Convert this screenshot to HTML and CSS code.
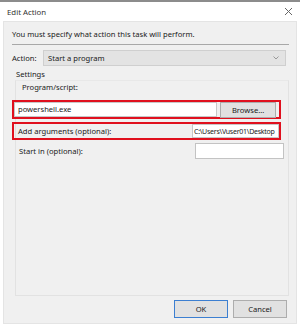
FILE: index.html
```html
<!DOCTYPE html>
<html>
<head>
<meta charset="utf-8">
<link rel="stylesheet" href="styles.css">
</head>
<body>
<div class="window">
  <div class="titlebar">
    <span class="title">Edit Action</span>
    <svg class="close" width="9" height="9" viewBox="0 0 9 9"><path d="M1 1L8 8M8 1L1 8" stroke="#666" stroke-width="1"/></svg>
  </div>
  <div class="panel">
    <div class="message">You must specify what action this task will perform.</div>
    <div class="sep"></div>
    <div class="action-row">
      <span class="lbl">Action:</span>
      <div class="select">
        <span>Start a program</span>
        <svg width="6" height="4" viewBox="0 0 6 4"><path d="M0.5 0.5L3 3L5.5 0.5" fill="none" stroke="#999" stroke-width="1"/></svg>
      </div>
    </div>
    <div class="settings-label">Settings</div>
    <div class="group">
      <div class="prog-label">Program/script:</div>
      <div class="redbox row1">
        <div class="input prog">powershell.exe</div>
        <div class="btn browse">Browse...</div>
      </div>
      <div class="redbox row2">
        <span class="arg-label">Add arguments (optional):</span>
        <div class="input arg">C:\Users\Vuser01\Desktop</div>
      </div>
      <div class="row3">
        <span class="start-label">Start in (optional):</span>
        <div class="input start"></div>
      </div>
    </div>
    <div class="buttons">
      <div class="btn ok">OK</div>
      <div class="btn cancel">Cancel</div>
    </div>
  </div>
</div>
</body>
</html>
```
FILE: styles.css
```css
* { box-sizing: border-box; }
html, body { margin: 0; padding: 0; }
body {
  width: 300px;
  height: 328px;
  background: #ffffff;
  font-family: "Noto Sans", "Open Sans", sans-serif;
  font-size: 7.6px;
  color: #1a1a1a;
  overflow: hidden;
}
.window {
  border-top: 2px solid #8c8c8c;
  height: 328px;
  display: flex;
  flex-direction: column;
}
.titlebar {
  height: 19px;
  display: flex;
  align-items: center;
  justify-content: space-between;
  padding: 0 7px 0 7px;
  background: #ffffff;
}
.title { font-size: 7.8px; color: #333; }
.panel {
  margin: 0 3px 4px 3px;
  flex: 1;
  background: #f0f0f0;
  border: 1px solid #e4e4e4;
  padding: 6px 7px 0 8px;
  display: flex;
  flex-direction: column;
}
.message { height: 12px; line-height: 12px; }
.sep {
  margin-top: 4px;
  height: 1px;
  background: #a8a8a8;
}
.action-row {
  margin-top: 5px;
  display: flex;
  align-items: center;
  height: 16px;
}
.lbl { width: 31px; }
.select {
  width: 243px;
  height: 16px;
  background: #e3e3e3;
  border: 1px solid #cfcfcf;
  display: flex;
  align-items: center;
  justify-content: space-between;
  padding: 0 6px 0 4px;
}
.settings-label {
  margin-top: 2px;
  margin-left: 4px;
  height: 12px;
  line-height: 12px;
}
.group {
  margin-left: 3px;
  height: 216px;
  border: 1px solid #e2e2e2;
  border-top-color: #e8e8e8;
  display: flex;
  flex-direction: column;
}
.prog-label {
  margin-left: 6px;
  height: 13px;
  line-height: 13px;
}
.redbox {
  border: 2px solid #e0101e;
  margin-left: -4px;
  width: 269px;
  display: flex;
  align-items: center;
}
.row1 { height: 19px; margin-top: 6px; padding: 0 3px 0 0; }
.input {
  background: #ffffff;
  border: 1px solid #adadad;
  height: 15px;
  line-height: 13px;
  padding: 0 3px;
  white-space: nowrap;
  overflow: hidden;
}
.prog { width: 204px; border-color: #c8c8c8; }
.btn {
  background: #e1e1e1;
  border: 1px solid #adadad;
  display: flex;
  align-items: center;
  justify-content: center;
}
.browse { margin-left: 3px; width: 56px; height: 16px; }
.row2 { height: 18px; margin-top: 3px; }
.arg-label { margin-left: 4px; width: 176px; }
.arg { width: 88px; height: 14px; padding: 0 1px; border-color: #c8c8c8; font-size: 7px; letter-spacing: -0.25px; }
.row3 {
  display: flex;
  align-items: center;
  height: 16px;
  margin-top: 3px;
}
.start-label { margin-left: 3px; width: 176px; }
.start { width: 89px; height: 16px; border-color: #c3c3c3; }
.buttons {
  margin-top: auto;
  margin-bottom: 5px;
  display: flex;
  justify-content: flex-end;
  gap: 5px;
  padding-right: 2px;
}
.ok, .cancel { width: 54px; height: 18px; }
.ok { border: 1px solid #3c7fd1; }
```
